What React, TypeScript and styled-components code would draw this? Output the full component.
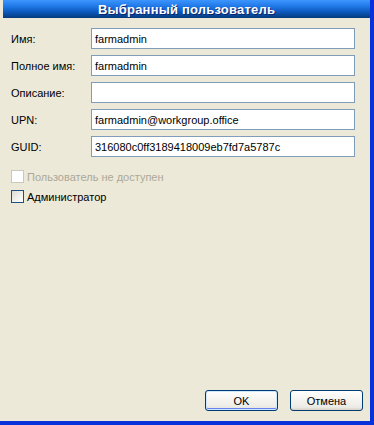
import React from 'react';
import styled, {createGlobalStyle} from 'styled-components';

const GlobalStyle = createGlobalStyle`
  html, body {
    margin: 0;
    padding: 0;
    background: #ece9d8;
  }
  * {
    box-sizing: border-box;
  }
`;

const Window = styled.div`
  width: 374px;
  height: 425px;
  display: flex;
  flex-direction: column;
  background: #ece9d8;
  border-right: 4px solid #0831d9;
  border-bottom: 4px solid #0831d9;
  font-family: Tahoma, "Liberation Sans", Arial, sans-serif;
  font-size: 11px;
  color: #000;
`;

const TitleBar = styled.div`
  height: 18px;
  margin-left: 3px;
  display: flex;
  align-items: center;
  justify-content: center;
  background: linear-gradient(to bottom, #3d95ff 0%, #1f78e6 35%, #0c55b8 70%, #063a7a 100%);
  color: #fff;
  font-family: "Liberation Sans", Arial, sans-serif;
  font-weight: bold;
  font-size: 13px;
  letter-spacing: 0.2px;
  text-shadow: 1px 1px 0 #0a246a;
`;

const Body = styled.div`
  flex: 1;
  display: flex;
  flex-direction: column;
  padding: 10px 7px 10px 11px;
`;

const Fields = styled.div`
  display: flex;
  flex-direction: column;
  gap: 6px;
`;

const Row = styled.div`
  display: flex;
  align-items: center;
  height: 21px;
`;

const Label = styled.label`
  width: 80px;
  flex-shrink: 0;
`;

const Input = styled.div`
  width: 264px;
  height: 21px;
  border: 1px solid #7f9db9;
  background: #fff;
  padding: 0 3px;
  display: flex;
  align-items: center;
  white-space: nowrap;
  overflow: hidden;
`;

const Checks = styled.div`
  margin-top: 13px;
  display: flex;
  flex-direction: column;
  gap: 7px;
`;

const CheckRow = styled.div<{$disabled?: boolean}>`
  display: flex;
  align-items: center;
  gap: 3px;
  height: 13px;
  color: ${p => (p.$disabled ? '#aca899' : '#000')};
`;

const Box = styled.span<{$disabled?: boolean}>`
  width: 13px;
  height: 13px;
  flex-shrink: 0;
  border: 1px solid ${p => (p.$disabled ? '#cac8bb' : '#1c5180')};
  background: ${p =>
    p.$disabled ? '#fff' : 'linear-gradient(135deg, #dcdbd5 0%, #f2f2f0 60%, #ffffff 100%)'};
`;

const Spacer = styled.div`
  flex: 1;
`;

const Buttons = styled.div`
  display: flex;
  justify-content: flex-end;
  gap: 12px;
`;

const Button = styled.button<{$default?: boolean}>`
  width: 73px;
  height: 21px;
  border: 1px solid #003c74;
  border-radius: 3px;
  background: linear-gradient(to bottom, #ffffff 0%, #f4f3ee 50%, #ecebe6 85%, #d6d0c5 100%);
  font-family: Tahoma, "Liberation Sans", Arial, sans-serif;
  font-size: 11px;
  color: #000;
  padding: 0;
  box-shadow: ${p => (p.$default ? 'inset 0 0 0 1px #cee7ff, inset 0 -1px 0 1px #6982ee' : 'none')};
`;

const fields = [
  {label: 'Имя:', value: 'farmadmin'},
  {label: 'Полное имя:', value: 'farmadmin'},
  {label: 'Описание:', value: ''},
  {label: 'UPN:', value: 'farmadmin@workgroup.office'},
  {label: 'GUID:', value: '316080c0ff3189418009eb7fd7a5787c'},
];

export default function App() {
  return (
    <>
      <GlobalStyle />
      <Window>
        <TitleBar>Выбранный пользователь</TitleBar>
        <Body>
          <Fields>
            {fields.map(f => (
              <Row key={f.label}>
                <Label>{f.label}</Label>
                <Input>{f.value}</Input>
              </Row>
            ))}
          </Fields>
          <Checks>
            <CheckRow $disabled>
              <Box $disabled />
              Пользователь не доступен
            </CheckRow>
            <CheckRow>
              <Box />
              Администратор
            </CheckRow>
          </Checks>
          <Spacer />
          <Buttons>
            <Button $default>OK</Button>
            <Button>Отмена</Button>
          </Buttons>
        </Body>
      </Window>
    </>
  );
}
